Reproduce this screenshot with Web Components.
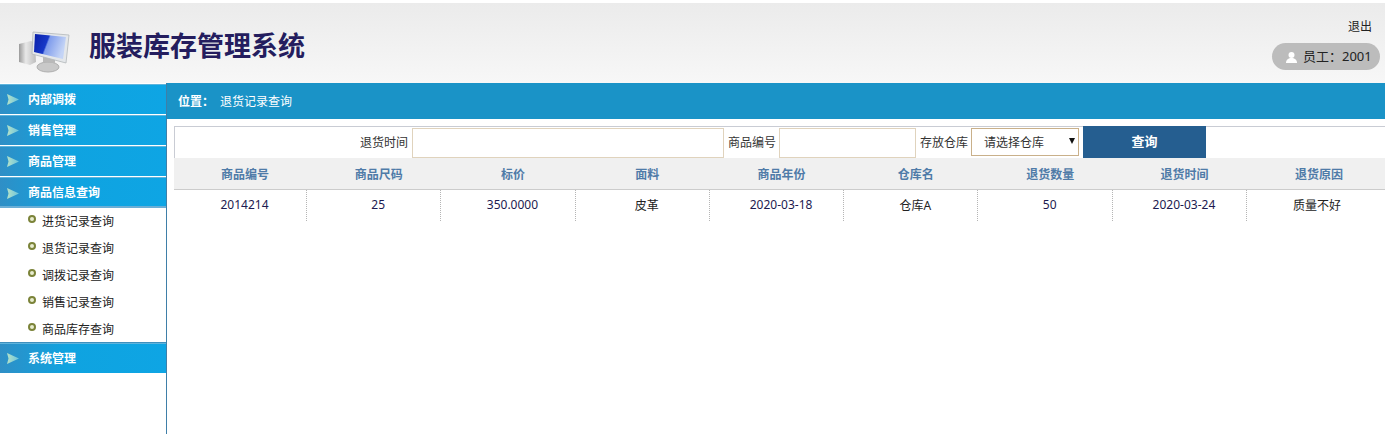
<!DOCTYPE html>
<html lang="zh">
<head>
<meta charset="utf-8">
<title>服装库存管理系统</title>
<style>
  html, body { margin: 0; height: 100%; background: #fff; overflow: hidden; }
  body { font: 12px "Noto Sans", "Noto Sans CJK SC", sans-serif; color: #222; }
</style>
</head>
<body>
<stock-app></stock-app>

<script>
/* Top banner with logo, title and user pill */
class AppHeader extends HTMLElement {
  constructor () {
    super()
    this.attachShadow({ mode: 'open' }).innerHTML = `
      <style>
        :host { display: flex; height: 80px; margin-top: 3px; background: linear-gradient(#ebebeb, #f7f7f7); justify-content: space-between; }
        .brand { display: flex; align-items: center; padding-left: 17px; }
        svg.logo { width: 56px; height: 46px; margin-top: 20px; }
        h1 { margin: 6px 0 0 16px; font-size: 27px; line-height: 36px; font-weight: 700; color: #241d5e; }
        .user { display: flex; flex-direction: column; align-items: flex-end; padding: 15px 5px 0 0; }
        .logout { color: #222; padding-right: 8px; line-height: 18px; }
        .pill { display: flex; align-items: center; margin-top: 7px; width: 108px; height: 27px; box-sizing: border-box; padding-left: 13px; border-radius: 14px; background: #bcbcbc; color: #222; font-size: 13px; }
        .pill span { margin-top: -2px; }
        .pill svg { width: 13px; height: 13px; margin-right: 5px; margin-top: 2px; }
      </style>
      <div class="brand">
        <svg class="logo" viewBox="0 0 56 46">
          <defs>
            <linearGradient id="scr" x1="0" x2="1" y1="0" y2="0.3">
              <stop offset="0" stop-color="#0a1fa8"/><stop offset=".45" stop-color="#1738c8"/>
              <stop offset=".5" stop-color="#7f9cec"/><stop offset="1" stop-color="#c4d4f6"/>
            </linearGradient>
            <linearGradient id="tower" x1="0" x2="1" y1="0" y2="0">
              <stop offset="0" stop-color="#9a9a9a"/><stop offset=".4" stop-color="#e8e8e8"/><stop offset="1" stop-color="#bdbdbd"/>
            </linearGradient>
          </defs>
          <path d="M2 14l12-3 4 2 1 19-6 3-11-3z" fill="url(#tower)"/>
          <ellipse cx="31" cy="37" rx="11" ry="5" fill="#c9c9c9" stroke="#aeaeae"/>
          <path d="M26 26l12 2 0 5-12-1z" fill="#b9b9b9"/>
          <path d="M16 2l36 3-3 28-34-9z" fill="#e4e7ea" stroke="#b3b7ba" stroke-width=".8"/>
          <path d="M18 4l31 3-3 22-29-7z" fill="url(#scr)"/>
        </svg>
        <h1>服装库存管理系统</h1>
      </div>
      <div class="user">
        <span class="logout">退出</span>
        <div class="pill">
          <svg viewBox="0 0 13 13"><circle cx="6.5" cy="4" r="3" fill="#fff"/><path d="M1 12c0-3.5 2.5-5 5.500-5s5.500 1.500 5.500 5z" fill="#fff"/></svg>
          <span><slot></slot></span>
        </div>
      </div>`
  }
}

/* One blue section heading of the side menu, sub items go in the slot */
class MenuGroup extends HTMLElement {
  constructor () {
    super()
    this.attachShadow({ mode: 'open' }).innerHTML = `
      <style>
        :host { display: block; }
        :host([open]) { margin-bottom: -1px; }
        .head { display: flex; align-items: center; height: 30px; box-sizing: border-box; border-top: 1px solid #5fb4dc; background: linear-gradient(90deg, #2f8fc6, #0fa3e0 40%, #0ea5e4); color: #fff; font-weight: 700; padding: 0 0 2px 7px; }
        .head svg { width: 12px; height: 11px; margin: 2px 9px 0 0; }
        .items { display: flex; flex-direction: column; }
        :host([open]) .head { border-bottom: 2px solid #6aaed6; height: 31px; padding-bottom: 0; }
        :host([open]) .items { margin-top: -1px; border-bottom: 1px solid #3f8fbd; }
      </style>
      <div class="head">
        <svg viewBox="0 0 12 11">
          <defs><linearGradient id="arrow" x1="0" x2="1" y1="0" y2="0"><stop offset="0" stop-color="#b5e2c8"/><stop offset="1" stop-color="#6cc4dc"/></linearGradient></defs>
          <path d="M0 0l12 5.500-12 5.500 1.500-5.500z" fill="url(#arrow)"/>
        </svg>
        <span></span>
      </div>
      <div class="items"><slot></slot></div>`
    this.shadowRoot.querySelector('.head span').textContent = this.getAttribute('label')
  }
}

/* Sub item of a group: ring bullet and a label */
class MenuItem extends HTMLElement {
  constructor () {
    super()
    this.attachShadow({ mode: 'open' }).innerHTML = `
      <style>
        :host { display: flex; align-items: center; height: 27px; padding-left: 28px; color: #222; }
        i { width: 4px; height: 4px; border: 2px solid #7b8339; border-radius: 50%; background: #e8ecd0; margin: -4px 6px 0 0; }
      </style>
      <i></i><slot></slot>`
  }
}

class SideMenu extends HTMLElement {
  constructor () {
    super()
    this.attachShadow({ mode: 'open' }).innerHTML = `
      <style>
        :host { display: flex; flex-direction: column; gap: 1px; width: 166px; flex: none; border-right: 1px solid #3f7fa8; padding-top: 1px; box-sizing: content-box; }
      </style>
      <slot></slot>`
  }
}

class BreadCrumb extends HTMLElement {
  constructor () {
    super()
    this.attachShadow({ mode: 'open' }).innerHTML = `
      <style>
        :host { display: flex; align-items: center; height: 36px; padding-left: 11px; background: #1a93c7; color: #fff; }
        b { margin-right: 6px; }
      </style>
      <b>位置：</b><slot></slot>`
  }
}

/* Filter row above the table */
class SearchBar extends HTMLElement {
  constructor () {
    super()
    this.attachShadow({ mode: 'open' }).innerHTML = `
      <style>
        :host { display: flex; height: 32px; box-sizing: border-box; padding-left: 185px; border: solid #c9ccd4; border-width: 1px 0 0 1px; color: #333; }
        label { display: flex; align-items: center; gap: 3px; margin-right: 4px; padding-bottom: 1px; }
        label:first-of-type { gap: 4px; }
        input { width: 312px; height: 30px; margin: 2px 0 0; box-sizing: border-box; border: 1px solid #e0d3bd; background: #fff; padding: 0 6px; font: inherit; outline: none; }
        input.short { width: 137px; }
        .pick { position: relative; display: block; }
        select { display: block; appearance: none; -webkit-appearance: none; width: 108px; height: 28px; box-sizing: border-box; border: 1px solid #c9b08a; border-radius: 0; background: #fff; padding: 0 0 0 12px; font: inherit; color: #333; outline: none; }
        .pick::after { content: ""; position: absolute; right: 4px; top: 10px; border: solid transparent; border-width: 6px 3.500px 0; border-top-color: #111; }
        button { width: 123px; height: 32px; margin: -1px 0 0; padding: 0 0 3px; border: 0; background: #255e90; color: #fff; font: 700 13px "Noto Sans", "Noto Sans CJK SC", sans-serif; }
      </style>
      <label>退货时间<input type="text"></label>
      <label>商品编号<input class="short" type="text"></label>
      <label>存放仓库<span class="pick"><select><option>请选择仓库</option></select></span></label>
      <button type="button">查询</button>`
  }
}

const COLUMNS = ['商品编号', '商品尺码', '标价', '面料', '商品年份', '仓库名', '退货数量', '退货时间', '退货原因']
const ROWS = [['2014214', '25', '350.0000', '皮革', '2020-03-18', '仓库A', '50', '2020-03-24', '质量不好']]

class ReturnTable extends HTMLElement {
  constructor () {
    super()
    const head = COLUMNS.map(c => `<span>${c}</span>`).join('')
    const body = ROWS.map(r => `<div class="row">${r.map(c => `<span>${c}</span>`).join('')}</div>`).join('')
    this.attachShadow({ mode: 'open' }).innerHTML = `
      <style>
        :host { display: block; }
        .head, .row { display: grid; grid-template-columns: 133px repeat(7, 134.3px) 1fr; text-align: center; }
        .head span, .row span { padding-left: 9px; box-sizing: border-box; }
        .head span:last-child { padding-left: 6px; }
        .row span:last-child { padding-left: 2px; }
        .head { height: 32px; box-sizing: border-box; align-items: center; background: #f0f0f0; border-bottom: 1px solid #ccc; color: #4f7ba8; font-weight: 700; }
        .row { height: 31px; color: #1c1a50; }
        .row span { display: flex; align-items: center; justify-content: center; padding-bottom: 2px; border-right: 1px dotted #b5b5b5; }
        .row span:last-child { border-right: 0; color: #222; }
        .row span:nth-child(4), .row span:nth-child(6) { color: #222; }
      </style>
      <div class="head">${head}</div>${body}`
  }
}

class StockApp extends HTMLElement {
  constructor () {
    super()
    this.attachShadow({ mode: 'open' }).innerHTML = `
      <style>
        :host { display: flex; flex-direction: column; height: 434px; }
        .body { display: flex; flex: 1; min-height: 0; }
        main { flex: 1; min-width: 0; }
        .panel { padding: 7px 0 0 7px; }
      </style>
      <app-header>员工：2001</app-header>
      <div class="body">
        <side-menu>
          <menu-group label="内部调拨"></menu-group>
          <menu-group label="销售管理"></menu-group>
          <menu-group label="商品管理"></menu-group>
          <menu-group label="商品信息查询" open>
            <menu-item>进货记录查询</menu-item>
            <menu-item>退货记录查询</menu-item>
            <menu-item>调拨记录查询</menu-item>
            <menu-item>销售记录查询</menu-item>
            <menu-item>商品库存查询</menu-item>
          </menu-group>
          <menu-group label="系统管理"></menu-group>
        </side-menu>
        <main>
          <bread-crumb>退货记录查询</bread-crumb>
          <div class="panel">
            <search-bar></search-bar>
            <return-table></return-table>
          </div>
        </main>
      </div>`
  }
}

customElements.define('app-header', AppHeader)
customElements.define('menu-group', MenuGroup)
customElements.define('menu-item', MenuItem)
customElements.define('side-menu', SideMenu)
customElements.define('bread-crumb', BreadCrumb)
customElements.define('search-bar', SearchBar)
customElements.define('return-table', ReturnTable)
customElements.define('stock-app', StockApp)
</script>
</body>
</html>
